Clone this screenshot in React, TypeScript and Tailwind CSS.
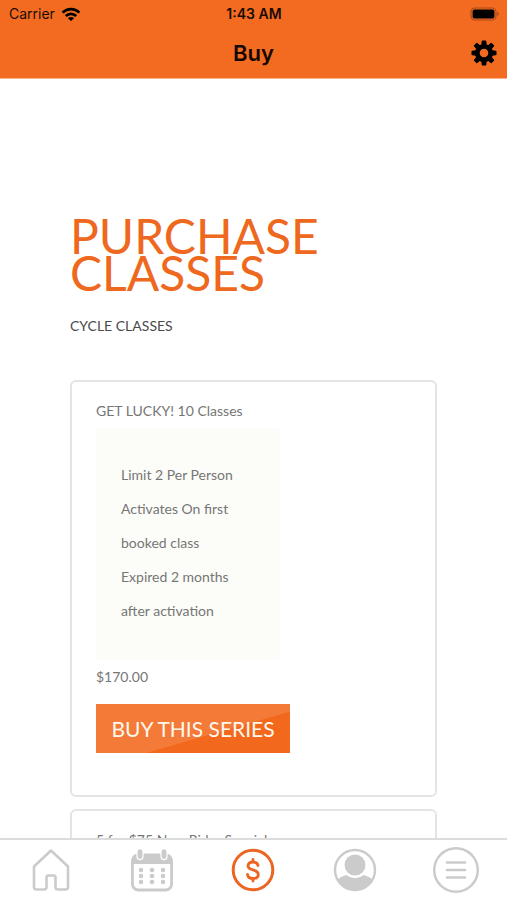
import type { ReactNode } from "react";

const GEAR_ANGLES = [0, 45, 90, 135];
const DOT_ROWS = [22, 28, 34];
const DOT_COLUMNS = [10, 21, 32];

function StatusBar() {
  return (
    <div className="grid h-7 grid-cols-3 items-center pr-2 pl-[9px] text-sm text-[#1a0c04]">
      <div className="flex items-center gap-1.5">
        <span>Carrier</span>
        <svg viewBox="0 0 20 15" className="h-[15px] w-5" fill="none" stroke="#000" strokeWidth="2.6" aria-hidden="true">
          <path d="M1.6 5.6a12 12 0 0 1 16.8 0" />
          <path d="M4.8 9a7.4 7.4 0 0 1 10.4 0" />
          <path d="M10 14 6.9 11.2a4.4 4.4 0 0 1 6.2 0Z" fill="#000" stroke="none" />
        </svg>
      </div>
      <span className="text-center font-semibold">1:43 AM</span>
      <svg viewBox="0 0 29 14" className="h-[14px] w-[29px] justify-self-end" aria-hidden="true">
        <rect x="1" y="1" width="25" height="12" rx="4" fill="none" stroke="#a8491a" strokeWidth="1.2" />
        <rect x="2.6" y="2.6" width="21.8" height="8.8" rx="2" fill="#000" />
        <path d="M27.2 5v4q1.600-.6 1.600-2t-1.600-2Z" fill="#a8491a" />
      </svg>
    </div>
  );
}

function GearIcon() {
  return (
    <svg viewBox="0 0 26 26" className="size-[26px]" fill="none" stroke="#000" aria-hidden="true">
      {GEAR_ANGLES.map((angle) => (
        <path
          key={angle}
          d="M11.400 1.200h3.200l.4 4h-4ZM11.400 24.800h3.200l.4-4h-4Z"
          fill="#000"
          strokeWidth="1.400"
          strokeLinejoin="round"
          transform={`rotate(${angle} 13 13)`}
        />
      ))}
      <circle cx="13" cy="13" r="6.700" strokeWidth="4.800" />
    </svg>
  );
}

function HomeIcon() {
  return (
    <svg viewBox="0 0 38 42" className="h-[42px] w-[38px]" fill="none" stroke="currentColor" strokeWidth="2.6" strokeLinejoin="round" aria-hidden="true">
      <path d="M19 1.500 36 17.500V38q0 2.500-2.500 2.500h-7.500q-2.500 0-2.500-2.500V28.500q0-2-2-2h-5q-2 0-2 2V38q0 2.500-2.500 2.500H4.500Q2 40.500 2 38V17.500Z" />
    </svg>
  );
}

function CalendarIcon() {
  return (
    <svg viewBox="0 0 42 44" className="h-11 w-[42px]" aria-hidden="true">
      <rect x="1.400" y="7" width="39.200" height="35" rx="6" fill="none" stroke="currentColor" strokeWidth="2.800" />
      <path d="M1 16v-4q0-6 6-6h28q6 0 6 6v4Z" fill="currentColor" />
      {[9, 33].map((x) => (
        <rect key={x} x={x - 3} y="0.600" width="6" height="11" rx="3" fill="currentColor" stroke="#fff" strokeWidth="1.200" />
      ))}
      {DOT_ROWS.map((y) =>
        DOT_COLUMNS.map((x) => <circle key={`${x}-${y}`} cx={x} cy={y} r="2.300" fill="currentColor" />),
      )}
    </svg>
  );
}

function DollarIcon() {
  return (
    <svg viewBox="0 0 44 44" className="size-11" fill="none" stroke="currentColor" strokeLinecap="round" aria-hidden="true">
      <circle cx="22" cy="22" r="19.800" strokeWidth="3" />
      <path d="M27 17.500q-.5-3.500-5-3.500t-5 3.700q0 2.900 5 4.200 5.300 1.300 5.300 4.600 0 4-5.300 4-5 0-5.500-4M22 11.500v2.500M22 30.500v2.500" strokeWidth="2.800" />
    </svg>
  );
}

function ProfileIcon() {
  return (
    <svg viewBox="0 0 44 44" className="size-11" aria-hidden="true">
      <circle cx="22" cy="22" r="20" fill="none" stroke="currentColor" strokeWidth="2.400" />
      <circle cx="22" cy="17" r="10.500" fill="currentColor" />
      <path d="M4.500 32q2.500-3.500 9-5 3.500 3 8.500 3t8.500-3q6.500 1.500 9 5a20 20 0 0 1-35 0Z" fill="currentColor" />
    </svg>
  );
}

function MenuIcon() {
  return (
    <svg viewBox="0 0 48 48" className="size-12" fill="none" stroke="currentColor" strokeWidth="2.600" strokeLinecap="round" aria-hidden="true">
      <circle cx="24" cy="24" r="21.800" strokeWidth="2.400" />
      <path d="M15 16.500h18M15 24h18M15 31.500h18" />
    </svg>
  );
}

function Card({ children }: { children: ReactNode }) {
  return (
    <article className="rounded-md border-2 border-[#e4e4e4] bg-white px-6 pt-3 pb-[42px] text-sm leading-[34px] text-[#767676]">
      {children}
    </article>
  );
}

const TABS = [
  { label: "Home", icon: <HomeIcon />, active: false },
  { label: "Schedule", icon: <CalendarIcon />, active: false },
  { label: "Buy", icon: <DollarIcon />, active: true },
  { label: "Profile", icon: <ProfileIcon />, active: false },
  { label: "Menu", icon: <MenuIcon />, active: false },
];

export default function App() {
  return (
    <div className="flex h-screen flex-col bg-white font-['Lato',sans-serif]">
      <header className="shrink-0 border-b border-[#f8b48c] bg-[#f26b21] font-['Inter',sans-serif]">
        <StatusBar />
        <div className="grid h-[50px] grid-cols-3 items-center px-[10px]">
          <h1 className="col-start-2 text-center text-[22px] font-semibold text-[#140800]">Buy</h1>
          <button type="button" aria-label="Settings" className="justify-self-end">
            <GearIcon />
          </button>
        </div>
      </header>

      <main className="min-h-0 flex-1 overflow-hidden px-[70px] pt-[138px]">
        <h2 className="text-5xl leading-[37px] font-normal text-[#ee6820]">
          PURCHASE
          <br />
          CLASSES
        </h2>
        <h3 className="mt-[22px] text-sm leading-[26px] text-[#4a4a4a]">CYCLE CLASSES</h3>

        <div className="mt-[41px] flex flex-col gap-3">
          <Card>
            <h4>GET LUCKY! 10 Classes</h4>
            <div className="w-[184px] bg-[#fcfdf8] px-[25px] pt-[30px] pb-8">
              <p>Limit 2 Per Person</p>
              <p>
                Activates On first
                <br />
                booked class
              </p>
              <p>
                Expired 2 months
                <br />
                after activation
              </p>
            </div>
            <p>$170.00</p>
            <button
              type="button"
              className="mt-[10px] block h-[49px] w-[194px] bg-[linear-gradient(164deg,#f47a38_60%,#f2681c_61%)] text-[21px] whitespace-nowrap text-[#fff8ee]"
            >
              BUY THIS SERIES
            </button>
          </Card>
          <Card>
            <h4>5 for $75 New Rider Special</h4>
          </Card>
        </div>
      </main>

      <nav className="grid h-[62px] shrink-0 grid-cols-5 border-t-2 border-[#dcdcdc] bg-white">
        {TABS.map((tab) => (
          <button
            key={tab.label}
            type="button"
            aria-label={tab.label}
            className={`flex items-center justify-center ${tab.active ? "text-[#ec6522]" : "text-[#cbcbcb]"}`}
          >
            {tab.icon}
          </button>
        ))}
      </nav>
    </div>
  );
}
